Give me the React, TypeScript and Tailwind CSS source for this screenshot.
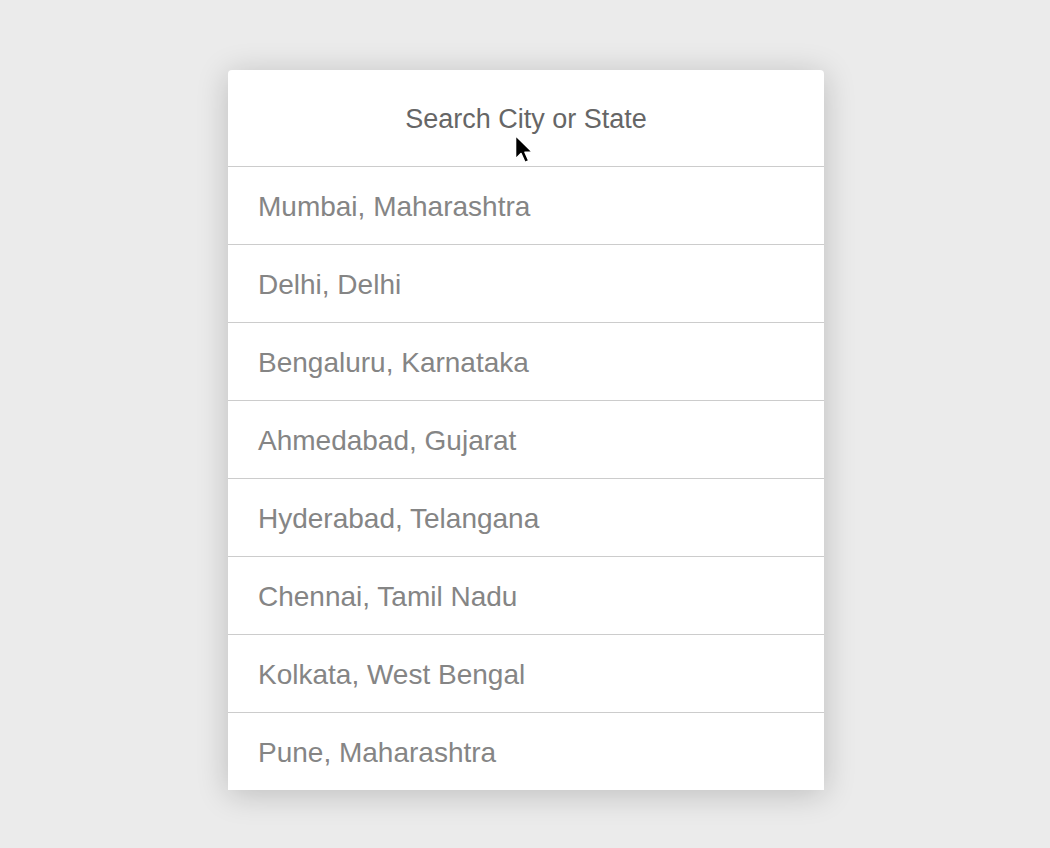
import React from 'react';

const cities = [
  'Mumbai, Maharashtra',
  'Delhi, Delhi',
  'Bengaluru, Karnataka',
  'Ahmedabad, Gujarat',
  'Hyderabad, Telangana',
  'Chennai, Tamil Nadu',
  'Kolkata, West Bengal',
  'Pune, Maharashtra',
];

// mouse pointer sitting over the search header
function Cursor() {
  return (
    <svg className="absolute left-[286px] top-[64px]" width="22" height="32" viewBox="0 0 22 32">
      <path
        d="M1.5 1.5 L1.5 25 L7 19.5 L11 28.5 L14.8 26.8 L11 18.2 L18.5 18.2 Z"
        fill="#000"
        stroke="#fff"
        strokeWidth="1.6"
        strokeLinejoin="round"
      />
    </svg>
  );
}

export default function App() {
  return (
    <div className="min-h-[848px] w-full bg-[#ebebeb] pl-[2px] pt-[70px] font-['Liberation_Sans',Arial,sans-serif]">
      <div className="mx-auto w-[596px] overflow-hidden rounded-t-[4px] bg-white shadow-[0_4px_32px_rgba(0,0,0,0.2)]">
        <div className="relative flex h-[97px] items-center justify-center border-b border-[#cccccc] pt-[2px] text-[27px] text-[#666666]">
          Search City or State
          <Cursor />
        </div>
        {cities.map((c, i) => (
          <div
            key={c}
            className={`flex items-center px-[30px] pt-[2px] text-[28px] text-[#858585] ${i < cities.length - 1 ? 'h-[78px] border-b border-[#cccccc]' : 'h-[77px]'}`}
          >
            {c}
          </div>
        ))}
      </div>
    </div>
  );
}
